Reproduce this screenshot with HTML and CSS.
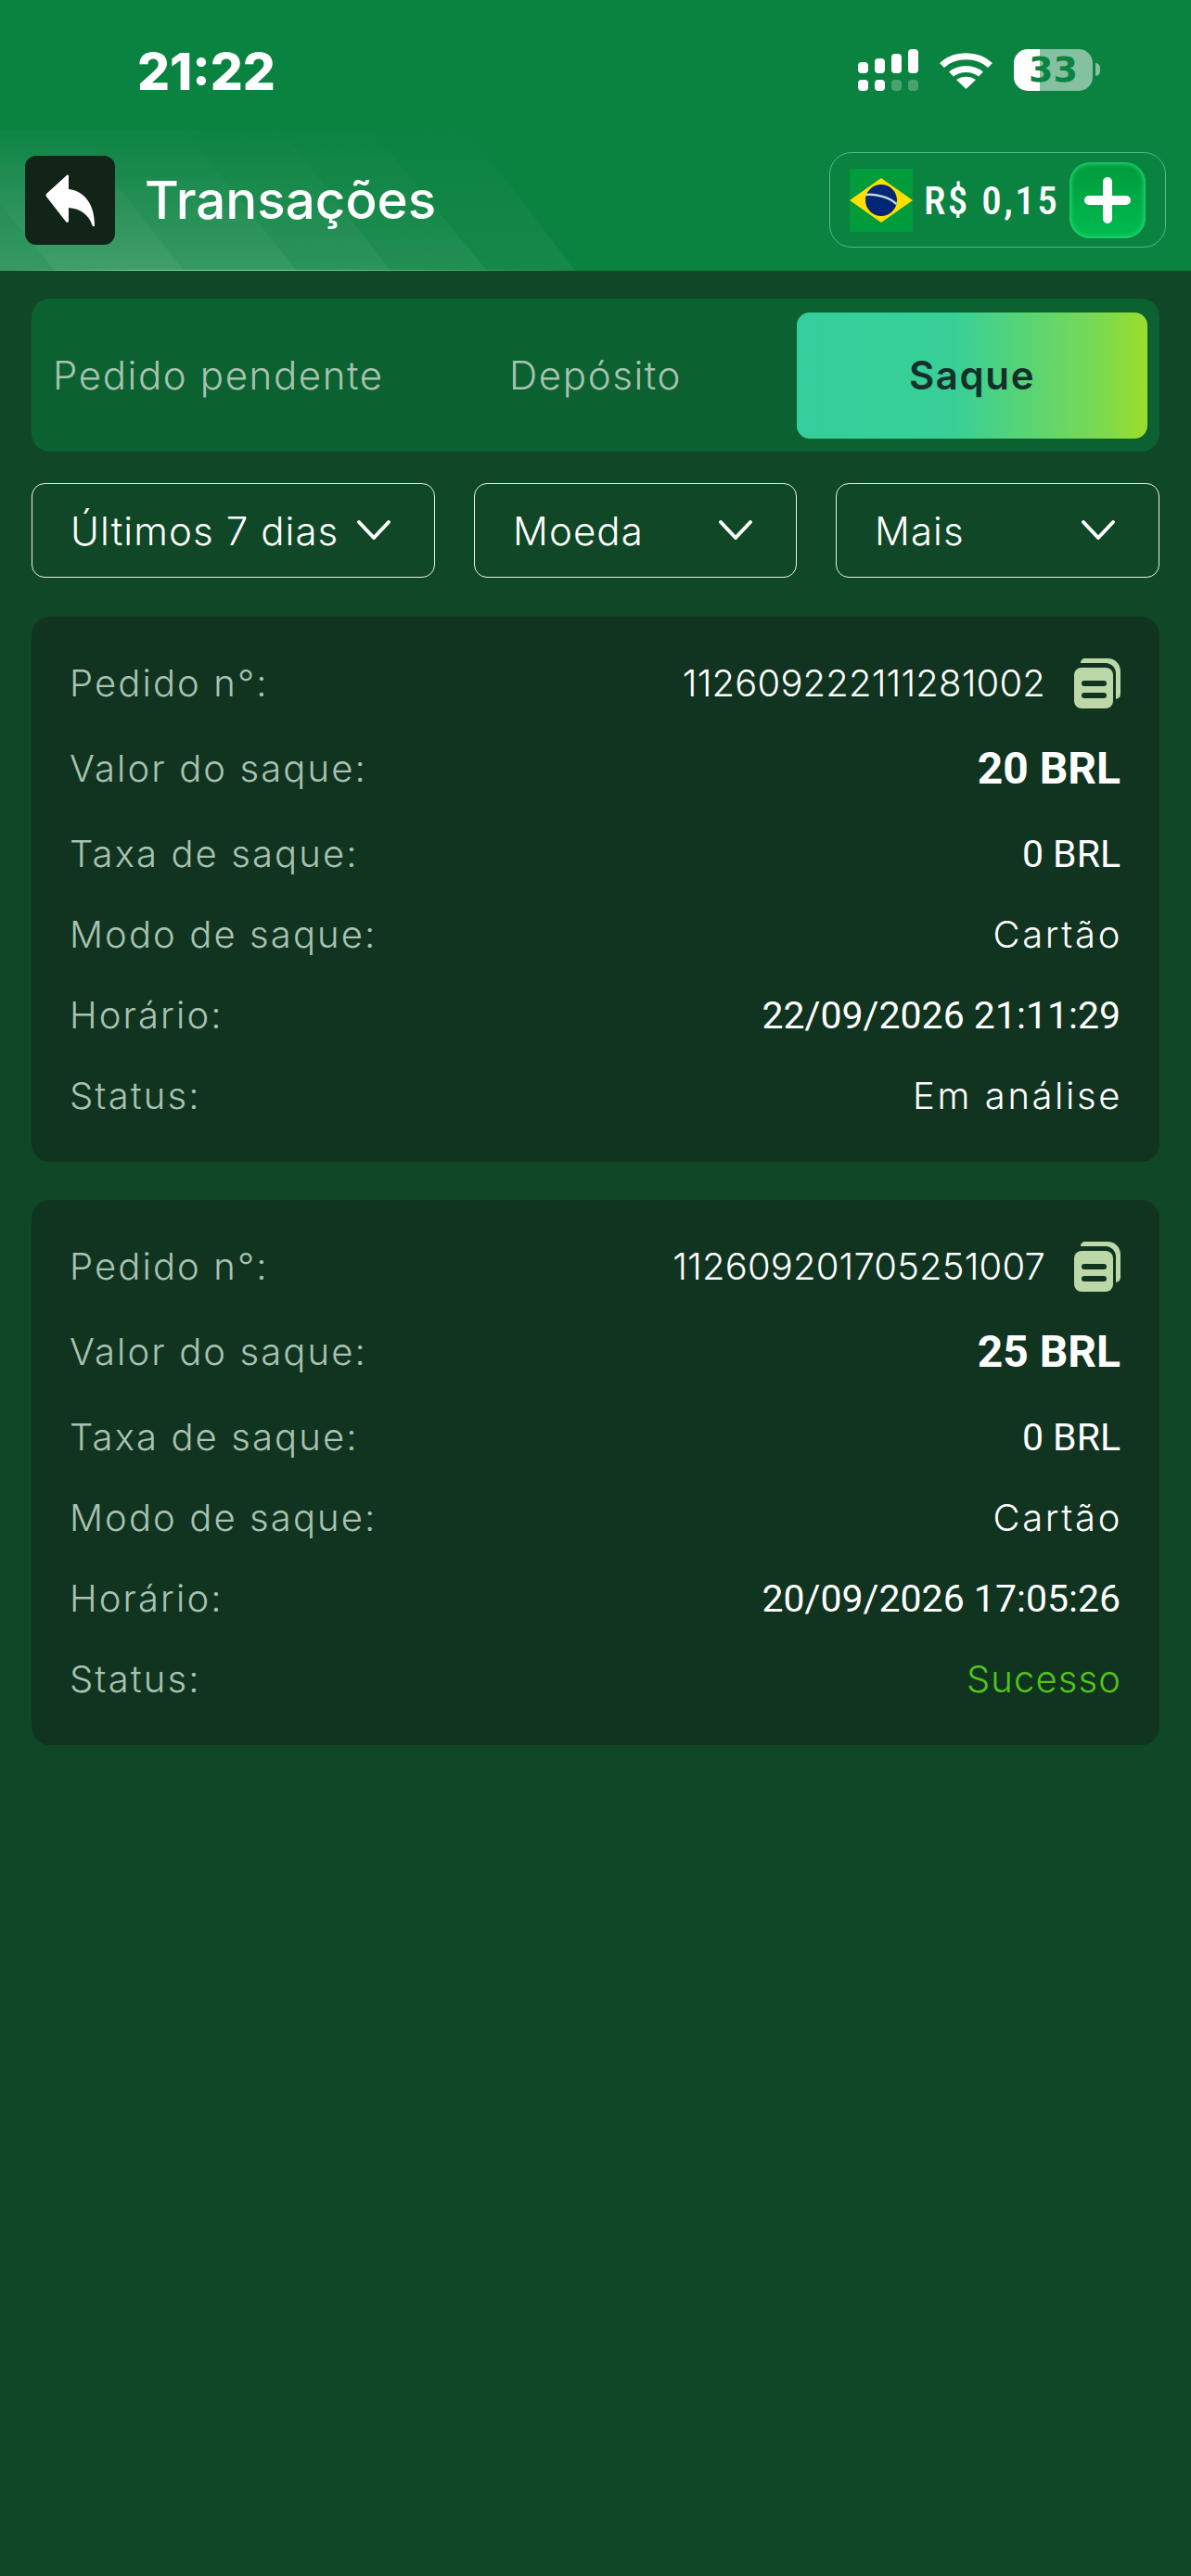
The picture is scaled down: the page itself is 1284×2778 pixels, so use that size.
FILE: index.html
```html
<!DOCTYPE html>
<html lang="pt-BR">
<head>
  <meta charset="UTF-8" />
  <meta name="viewport" content="width=device-width, initial-scale=1.0" />
  <title>Transações</title>
  <link rel="stylesheet" href="styles.css">
</head>
<body>

<header class="top">
  <svg class="stripes" width="660" height="152" viewBox="0 0 660 152">
    <defs>
      <linearGradient id="fade" x1="0" y1="0" x2="0" y2="1">
        <stop offset="0" stop-color="#fff" stop-opacity="0.004"/>
        <stop offset="1" stop-color="#fff" stop-opacity="0.05"/>
      </linearGradient>
    </defs>
    <polygon points="0,0 505,0 620,152 0,152" fill="url(#fade)"/>
    <polygon points="0,0 400,0 525,152 0,152" fill="url(#fade)"/>
    <polygon points="0,0 303,0 421,152 0,152" fill="url(#fade)"/>
    <polygon points="0,0 198,0 320,152 0,152" fill="url(#fade)"/>
    <polygon points="0,0 80,0 198,152 59,152 0,80" fill="url(#fade)"/>
  </svg>

  <div class="status">
    <span class="time">21:22</span>
    <div class="status-icons">
      <svg class="signal" width="65" height="45" viewBox="0 0 65 45">
        <rect x="0" y="14" width="11" height="12" rx="4" fill="#fff"/>
        <rect x="18" y="10" width="11" height="16" rx="4" fill="#fff"/>
        <rect x="36" y="5" width="11" height="21" rx="4" fill="#fff"/>
        <rect x="54" y="0" width="11" height="26" rx="4" fill="#fff"/>
        <rect x="0" y="33" width="11" height="12" rx="4" fill="#fff"/>
        <rect x="18" y="33" width="11" height="12" rx="4" fill="#fff"/>
        <rect x="36" y="33" width="11" height="12" rx="4" fill="#fff" fill-opacity="0.25"/>
        <rect x="54" y="33" width="11" height="12" rx="4" fill="#fff" fill-opacity="0.25"/>
      </svg>
      <svg class="wifi" width="57" height="41" viewBox="0 0 57 41">
        <path d="M2.500 15.500C16 2.500 41 2.500 54.500 15.500" fill="none" stroke="#fff" stroke-width="7"/>
        <path d="M12.500 25C21 17.500 36 17.500 44.500 25" fill="none" stroke="#fff" stroke-width="7"/>
        <path d="M28.500 41L18 31C24 26.500 33 26.500 39 31Z" fill="#fff"/>
      </svg>
      <div class="battery">33</div>
      <span class="battery-nub"></span>
    </div>
  </div>

  <div class="bar">
    <button class="back">
      <svg width="54" height="56" viewBox="0 0 54 56">
        <path d="M23 1C24 0 25 1 25 2V16C42 18 53 32 53 55C53 57 51 57 50.500 55C47 44 38 37 25 36V50C25 52 23 52.500 22 51L1 24C0.500 23 0.500 22 1 21Z" fill="#fff"/>
      </svg>
    </button>
    <h1>Transações</h1>
    <div class="wallet">
      <svg class="flag" width="68" height="68" viewBox="0 0 68 68">
        <rect width="68" height="68" fill="#009b3a"/>
        <polygon points="34,10 68,34 34,58 0,34" fill="#fedf00"/>
        <ellipse cx="34" cy="34" rx="17" ry="17" fill="#002776"/>
        <path d="M17.500 28C27 27 42 30 50.500 38" fill="none" stroke="#c9d6dd" stroke-width="2.500"/>
      </svg>
      <span class="amount">R$ 0,15</span>
      <button class="plus">
        <svg width="50" height="50" viewBox="0 0 50 50">
          <path d="M25 5V45M5 25H45" fill="none" stroke="#fff" stroke-width="10" stroke-linecap="round"/>
        </svg>
      </button>
    </div>
  </div>
</header>

<main class="content">
  <div class="tabs">
    <div class="tab tab-first">Pedido pendente</div>
    <div class="tab tab-mid">Depósito</div>
    <div class="tab active">Saque</div>
  </div>

  <div class="filters">
    <div class="filter filter-days">
      <span>Últimos 7 dias</span>
      <svg class="chevron" width="38" height="24" viewBox="0 0 38 24"><path d="M3 3L19 20L35 3" fill="none" stroke="#fff" stroke-width="4" stroke-linecap="round" stroke-linejoin="round"/></svg>
    </div>
    <div class="filter filter-coin">
      <span>Moeda</span>
      <svg class="chevron" width="38" height="24" viewBox="0 0 38 24"><path d="M3 3L19 20L35 3" fill="none" stroke="#fff" stroke-width="4" stroke-linecap="round" stroke-linejoin="round"/></svg>
    </div>
    <div class="filter filter-more">
      <span>Mais</span>
      <svg class="chevron" width="38" height="24" viewBox="0 0 38 24"><path d="M3 3L19 20L35 3" fill="none" stroke="#fff" stroke-width="4" stroke-linecap="round" stroke-linejoin="round"/></svg>
    </div>
  </div>

  <section class="card">
    <div class="row">
      <span class="label">Pedido n°:</span>
      <div class="order">
        <span class="order-no">112609222111281002</span>
        <svg class="copy" width="50" height="54" viewBox="0 0 50 54">
          <path d="M12 0H36C44 0 50 6 50 14V38C50 42 48 43 45 44V16C45 10 40 5 34 5H7C7 2 9 0 12 0Z" fill="#bdd8a8"/>
          <rect x="0" y="10" width="42" height="44" rx="8" fill="#bdd8a8"/>
          <rect x="8" y="24" width="27" height="6" rx="3" fill="#10341f"/>
          <rect x="8" y="37" width="27" height="6" rx="3" fill="#10341f"/>
        </svg>
      </div>
    </div>
    <div class="row row-amount">
      <span class="label">Valor do saque:</span>
      <span class="num-bold">20 BRL</span>
    </div>
    <div class="row">
      <span class="label">Taxa de saque:</span>
      <span class="num">0 BRL</span>
    </div>
    <div class="row">
      <span class="label">Modo de saque:</span>
      <span class="value">Cartão</span>
    </div>
    <div class="row">
      <span class="label">Horário:</span>
      <span class="num">22/09/2026 21:11:29</span>
    </div>
    <div class="row">
      <span class="label">Status:</span>
      <span class="value">Em análise</span>
    </div>
  </section>

  <section class="card">
    <div class="row">
      <span class="label">Pedido n°:</span>
      <div class="order">
        <span class="order-no">112609201705251007</span>
        <svg class="copy" width="50" height="54" viewBox="0 0 50 54">
          <path d="M12 0H36C44 0 50 6 50 14V38C50 42 48 43 45 44V16C45 10 40 5 34 5H7C7 2 9 0 12 0Z" fill="#bdd8a8"/>
          <rect x="0" y="10" width="42" height="44" rx="8" fill="#bdd8a8"/>
          <rect x="8" y="24" width="27" height="6" rx="3" fill="#10341f"/>
          <rect x="8" y="37" width="27" height="6" rx="3" fill="#10341f"/>
        </svg>
      </div>
    </div>
    <div class="row row-amount">
      <span class="label">Valor do saque:</span>
      <span class="num-bold">25 BRL</span>
    </div>
    <div class="row">
      <span class="label">Taxa de saque:</span>
      <span class="num">0 BRL</span>
    </div>
    <div class="row">
      <span class="label">Modo de saque:</span>
      <span class="value">Cartão</span>
    </div>
    <div class="row">
      <span class="label">Horário:</span>
      <span class="num">20/09/2026 17:05:26</span>
    </div>
    <div class="row">
      <span class="label">Status:</span>
      <span class="value success">Sucesso</span>
    </div>
  </section>
</main>

</body>
</html>
```

FILE: styles.css
```css
:root {
  --page-bg: #104726;
  --head-bg: #0a8240;
  --tabs-bg: #0b6230;
  --card-bg: #10341f;
  --muted: #a9c2b2;
  --text: #ffffff;
}
* { box-sizing: border-box; }

body {
  margin: 0;
  background: var(--page-bg);
  color: var(--text);
  font-family: 'Inter', sans-serif;
  min-height: 100vh;
}

button {
  border: none;
  padding: 0;
  background: none;
}

/* header */
.top {
  position: relative;
  height: 292px;
  background: var(--head-bg);
  overflow: hidden;
}

/* thin light line under the header, fades out to the right */
.top::after {
  content: "";
  position: absolute;
  left: 0;
  right: 0;
  bottom: 0;
  height: 1px;
  background: linear-gradient(90deg, rgba(110,220,150,0) 0%, #6edc96 12%, #6edc96 24%, rgba(110,220,150,0) 48%);
}

.stripes {
  position: absolute;
  left: 0;
  top: 140px;
}

.status {
  position: relative;
  height: 140px;
  display: flex;
  justify-content: space-between;
  padding: 53px 98px 0 148px;
}

.time {
  font-size: 55px;
  font-weight: 800;
  line-height: 48px;
}

.status-icons {
  display: flex;
  align-items: flex-start;
}

.wifi {
  margin: 2px 23px 0 23px;
}

.battery {
  width: 85px;
  height: 45px;
  border-radius: 15px;
  background: linear-gradient(90deg, #fff 33%, rgba(255,255,255,0.5) 33%);
  color: var(--head-bg);
  font-family: 'DejaVu Sans', sans-serif;
  font-size: 38px;
  font-weight: 700;
  line-height: 45px;
  text-align: center;
}

.battery-nub {
  width: 5px;
  height: 14px;
  margin: 15px 0 0 3px;
  border-radius: 0 7px 7px 0;
  background: rgba(255,255,255,0.5);
}

.bar {
  position: relative;
  height: 151px;
  display: flex;
  align-items: center;
  padding: 0 27px;
}

.back {
  width: 97px;
  height: 96px;
  background: #122418;
  border-radius: 12px;
  display: flex;
  align-items: center;
  justify-content: center;
}

.bar h1 {
  margin: 0 0 0 32px;
  font-size: 56.500px;
  font-weight: 500;
}

.wallet {
  margin-left: auto;
  width: 363px;
  height: 103px;
  border: 1px solid #55b884;
  border-radius: 24px;
  display: flex;
  align-items: center;
  padding-left: 21px;
}

.amount {
  margin-left: 12px;
  width: 157px;
  font-family: 'Roboto', sans-serif;
  font-size: 43px;
  font-weight: 500;
  font-stretch: 85%;
  letter-spacing: 2.500px;
  white-space: nowrap;
}

.plus {
  width: 82px;
  height: 82px;
  border-radius: 22px;
  background: linear-gradient(180deg, #00993b, #00bd50);
  box-shadow: inset 0 0 4px 2px #1fd672;
  display: flex;
  align-items: center;
  justify-content: center;
}

/* main */
.content {
  padding: 30px 34px 0 34px;
}

.tabs {
  height: 165px;
  background: var(--tabs-bg);
  border-radius: 20px;
  display: flex;
  align-items: center;
  font-size: 42px;
  font-weight: 300;
  letter-spacing: 1.600px;
  color: var(--muted);
  padding-right: 13px;
}

.tab-first {
  margin-left: 23px;
  width: 407px;
  white-space: nowrap;
}

.tab-mid {
  width: 395px;
  padding-left: 85px;
}

.tab.active {
  width: 378px;
  height: 136px;
  border-radius: 14px;
  background: linear-gradient(90deg, #35ce9c 0%, #38cf97 45%, #78d954 85%, #9bdd2a 100%);
  color: #14302a;
  font-weight: 600;
  display: flex;
  align-items: center;
  justify-content: center;
}

.filters {
  display: flex;
  justify-content: space-between;
  margin-top: 34px;
}

.filter {
  height: 102px;
  border: 1.500px solid #e8f0ea;
  border-radius: 14px;
  display: flex;
  align-items: center;
  justify-content: space-between;
  font-size: 42px;
  font-weight: 300;
  letter-spacing: 1.100px;
  padding: 0 46px 0 41px;
  white-space: nowrap;
}

.filter-days { width: 435px; }
.filter-coin { width: 348px; }
.filter-more { width: 349px; }

/* cards */
.card {
  margin-top: 42px;
  height: 588px;
  background: var(--card-bg);
  border-radius: 20px;
  padding: 28px 42px 28px 41px;
}

.card + .card {
  margin-top: 41px;
}

.row {
  height: 87px;
  display: flex;
  align-items: center;
  justify-content: space-between;
}

.row-amount {
  height: 97px;
}

.label {
  font-size: 40px;
  font-weight: 300;
  letter-spacing: 2.100px;
  color: var(--muted);
}

.value {
  font-size: 40px;
  font-weight: 300;
  letter-spacing: 2.600px;
  margin-right: -2px;
}

.success {
  color: #52c41a;
  letter-spacing: 1.100px;
  margin-right: -1px;
}

.order {
  display: flex;
  align-items: center;
  gap: 31px;
}

.order-no {
  font-size: 40px;
  font-weight: 300;
  letter-spacing: 0.150px;
}

.num {
  font-family: 'Roboto', sans-serif;
  font-size: 41px;
  white-space: nowrap;
}

.num-bold {
  font-family: 'Roboto', sans-serif;
  font-size: 48px;
  font-weight: 700;
}
```
